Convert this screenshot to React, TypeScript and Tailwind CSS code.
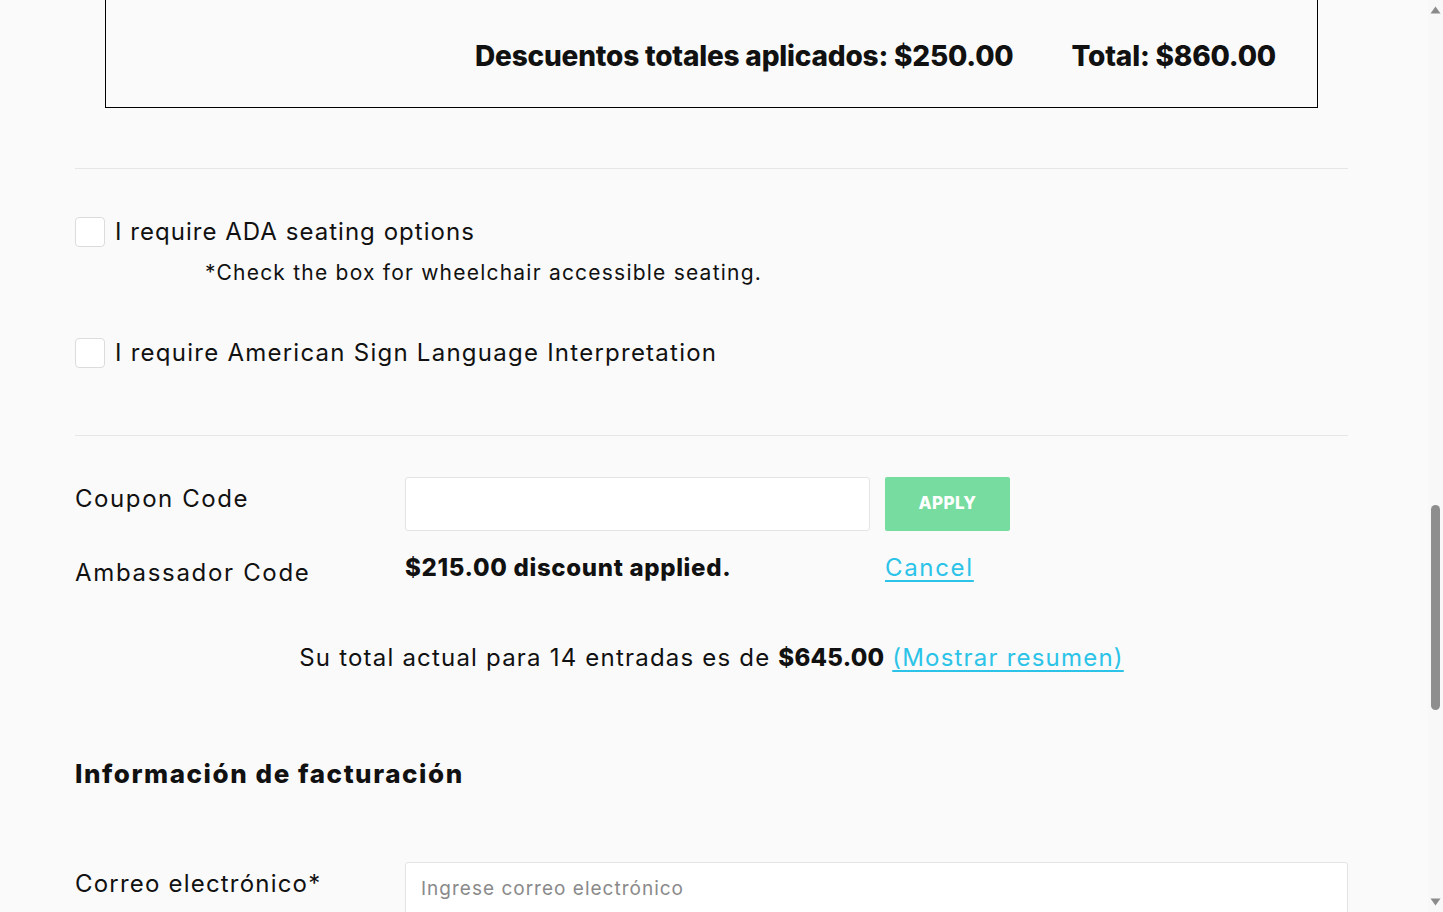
import React from "react";

const font = { fontFamily: "Inter, 'Noto Sans', sans-serif" };

function Checkbox() {
  return <div className="w-[30px] h-[30px] shrink-0 rounded-[4px] border border-[#dcdcdc] bg-white" />;
}

export default function App() {
  return (
    <div className="flex h-[912px] overflow-hidden bg-[#fafafa] text-[#111]" style={font}>
      <div className="w-[1428px] shrink-0 pl-[75px]">
        <div className="w-[1273px]">
          {/* Totals box */}
          <div className="mx-[30px] h-[108px] border-x border-b border-black flex items-end justify-end gap-[58px] pr-[41px] pb-[33px]">
            <div className="text-[28px] leading-[36px] font-extrabold tracking-[-0.007em]">Descuentos totales aplicados: $250.00</div>
            <div className="text-[28px] leading-[36px] font-extrabold tracking-[-0.007em]">Total: $860.00</div>
          </div>

          <div className="mt-[60px] border-t border-[#e6e6e6]" />

          {/* Checkboxes */}
          <div className="mt-[48px] flex items-center h-[30px] gap-[10px]">
            <Checkbox />
            <span className="text-[24px] leading-[30px] tracking-[0.043em]">I require ADA seating options</span>
          </div>
          <div className="mt-[11px] ml-[130px] text-[21px] leading-[30px] tracking-[0.058em]">
            *Check the box for wheelchair accessible seating.
          </div>
          <div className="mt-[50px] flex items-center h-[30px] gap-[10px]">
            <Checkbox />
            <span className="text-[24px] leading-[30px] tracking-[0.052em]">I require American Sign Language Interpretation</span>
          </div>

          <div className="mt-[67px] border-t border-[#e6e6e6]" />

          {/* Coupon */}
          <div className="mt-[41px] flex items-start">
            <div className="w-[330px] h-[44px] flex items-center text-[24px] tracking-[0.066em]">Coupon Code</div>
            <div className="w-[465px] h-[54px] bg-white border border-[#e4e4e4] rounded-[3px]" />
            <button className="ml-[15px] w-[125px] h-[54px] bg-[#77dc9f] rounded-[2px] text-white font-extrabold text-[17px] tracking-wide">
              APPLY
            </button>
          </div>
          <div className="mt-[20px] flex items-start">
            <div className="w-[330px] pt-[5px] text-[24px] leading-[34px] tracking-[0.07em]">Ambassador Code</div>
            <div className="w-[480px] text-[24px] leading-[34px] font-extrabold tracking-[0.028em]">$215.00 discount applied.</div>
            <a className="text-[24px] leading-[34px] tracking-[0.07em] text-[#2cc3e8] underline underline-offset-[4px]" href="#">
              Cancel
            </a>
          </div>

          {/* Total line */}
          <div className="mt-[51px] text-center text-[24px] leading-[34px] tracking-[0.05em]">
            Su total actual para 14 entradas es de <span className="font-extrabold tracking-[0.01em]">$645.00</span>{" "}
            <a className="text-[#2cc3e8] underline underline-offset-[4px]" href="#">(Mostrar resumen)</a>
          </div>

          {/* Billing */}
          <div className="mt-[82px] text-[26px] leading-[34px] font-extrabold tracking-[0.06em]">Información de facturación</div>
          <div className="mt-[71px] flex items-start">
            <div className="w-[330px] h-[44px] flex items-center text-[24px] tracking-[0.05em]">Correo electrónico*</div>
            <div className="flex-1 h-[54px] bg-white border border-[#e4e4e4] rounded-[3px] flex items-center px-[15px] text-[19px] tracking-[0.053em] text-[#8a8a8a]">
              Ingrese correo electrónico
            </div>
          </div>
        </div>
      </div>

      {/* Scrollbar */}
      <div className="w-[15px] shrink-0 h-full flex flex-col items-center bg-[#f8f8f8]">
        <svg width="11" height="8" viewBox="0 0 11 8" className="mt-[6px] shrink-0">
          <path d="M5.5 0.5 L10.5 7.5 L0.5 7.5 Z" fill="#8b8b8b" />
        </svg>
        <div className="mt-[491px] w-[9px] h-[205px] shrink-0 rounded-full bg-[#8e8e8e]" />
        <div className="flex-1" />
        <svg width="11" height="8" viewBox="0 0 11 8" className="mb-[6px] shrink-0">
          <path d="M0.5 0.5 L10.5 0.5 L5.5 7.5 Z" fill="#8b8b8b" />
        </svg>
      </div>
    </div>
  );
}
